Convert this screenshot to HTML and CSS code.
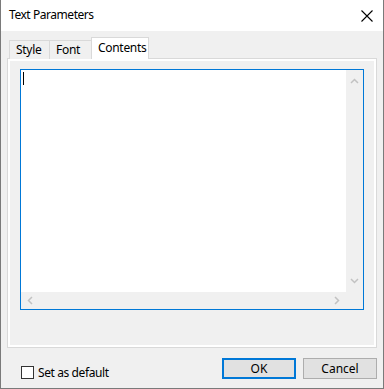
FILE: index.html
```html
<!DOCTYPE html>
<html>
<head>
<meta charset="utf-8">
<link rel="stylesheet" href="styles.css">
</head>
<body>
<div class="dialog">
  <div class="titlebar">
    <span class="title">Text Parameters</span>
    <svg class="close" width="12" height="12" viewBox="0 0 12 12"><path d="M0.5 0.5 L11.5 11.5 M11.5 0.5 L0.5 11.5" stroke="#000" stroke-width="1.1" fill="none"/></svg>
  </div>
  <div class="body">
    <div class="tabs">
      <div class="tab tab-style">Style</div>
      <div class="tab tab-font">Font</div>
      <div class="tab active">Contents</div>
    </div>
    <div class="panel">
      <div class="page">
        <div class="editor">
          <div class="edit-area"><span class="caret"></span></div>
          <div class="vscroll">
            <svg width="9" height="6" viewBox="0 0 9 6"><path d="M1 5 L4.5 1.5 L8 5" stroke="#c2c2c2" stroke-width="1.5" fill="none"/></svg>
            <svg width="9" height="6" viewBox="0 0 9 6"><path d="M1 1 L4.5 4.5 L8 1" stroke="#c2c2c2" stroke-width="1.5" fill="none"/></svg>
          </div>
          <div class="hscroll">
            <svg width="6" height="9" viewBox="0 0 6 9"><path d="M5 1 L1.5 4.5 L5 8" stroke="#c2c2c2" stroke-width="1.5" fill="none"/></svg>
            <svg width="6" height="9" viewBox="0 0 6 9"><path d="M1 1 L4.5 4.5 L1 8" stroke="#c2c2c2" stroke-width="1.5" fill="none"/></svg>
          </div>
          <div class="corner"></div>
        </div>
      </div>
    </div>
    <div class="footer">
      <label class="check"><span class="box"></span>Set as default</label>
      <div class="buttons">
        <div class="btn default">OK</div>
        <div class="btn">Cancel</div>
      </div>
    </div>
  </div>
</div>
</body>
</html>
```

FILE: styles.css
```css
* { box-sizing: border-box; }
html, body { margin: 0; padding: 0; }
body {
  width: 384px;
  height: 389px;
  overflow: hidden;
  font-family: "Noto Sans", "Open Sans", sans-serif;
  font-size: 12px;
  color: #000;
  background: #fff;
}
.dialog {
  width: 384px;
  height: 389px;
  border: 1px solid #7a7a7a;
  border-top: none;
  display: flex;
  flex-direction: column;
  background: #f0f0f0;
}
.titlebar {
  height: 31px;
  background: #fff;
  display: flex;
  align-items: center;
  justify-content: space-between;
  padding: 0 10px 2px 8px;
}
.title { font-size: 12px; letter-spacing: -0.45px; }
.close { display: block; margin-top: 2px; }
.body {
  flex: 1;
  padding: 7px 6px 0 6px;
  display: flex;
  flex-direction: column;
}
.tabs {
  display: flex;
  align-items: flex-end;
  height: 21px;
  padding-left: 2px;
  position: relative;
  z-index: 1;
  margin-bottom: -1px;
}
.tab {
  height: 19px;
  border: 1px solid #d9d9d9;
  border-bottom: none;
  background: #f0f0f0;
  padding: 0 0 0 6px;
  line-height: 18px;
  font-size: 12px;
  letter-spacing: -0.3px;
}
.tab-style { width: 41px; }
.tab-font { width: 42px; border-left: none; padding-left: 6px; }
.tab.active {
  height: 22px;
  width: 58px;
  background: #fff;
  border-left: 1px solid #d9d9d9;
  margin-left: -1px;
  padding-left: 6px;
  line-height: 19px;
}
.panel {
  height: 290px;
  border: 1px solid #d9d9d9;
  background: #fff;
  padding: 2px 2px 2px 2px;
}
.page {
  height: 100%;
  background: #f0f0f0;
  padding: 8px 10px 0 10px;
}
.editor {
  height: 241px;
  border: 1px solid #0078d7;
  background: #fff;
  display: grid;
  grid-template-columns: 1fr 17px;
  grid-template-rows: 1fr 17px;
}
.edit-area {
  position: relative;
  background: #fff;
}
.caret {
  position: absolute;
  left: 2px;
  top: 2px;
  width: 1px;
  height: 13px;
  background: #000;
}
.vscroll {
  background: #f0f0f0;
  display: flex;
  flex-direction: column;
  justify-content: space-between;
  align-items: center;
  padding: 8px 0 8px 0;
}
.hscroll {
  background: #f0f0f0;
  display: flex;
  justify-content: space-between;
  align-items: center;
  padding: 0 6px 0 6px;
}
.corner { background: #f0f0f0; }
.footer {
  display: flex;
  justify-content: space-between;
  align-items: flex-start;
  padding: 10px 0 0 14px;
}
.check {
  display: flex;
  align-items: center;
  gap: 4px;
  margin-top: 6px;
  font-size: 12px;
  letter-spacing: -0.4px;
}
.box {
  width: 13px;
  height: 13px;
  border: 1px solid #333;
  background: #fff;
}
.buttons { display: flex; gap: 7px; }
.btn {
  width: 74px;
  height: 21px;
  border: 1px solid #adadad;
  background: #e1e1e1;
  display: flex;
  align-items: center;
  justify-content: center;
  font-size: 12px;
  padding-bottom: 1px;
}
.btn.default { border: 2px solid #0078d7; }
```
